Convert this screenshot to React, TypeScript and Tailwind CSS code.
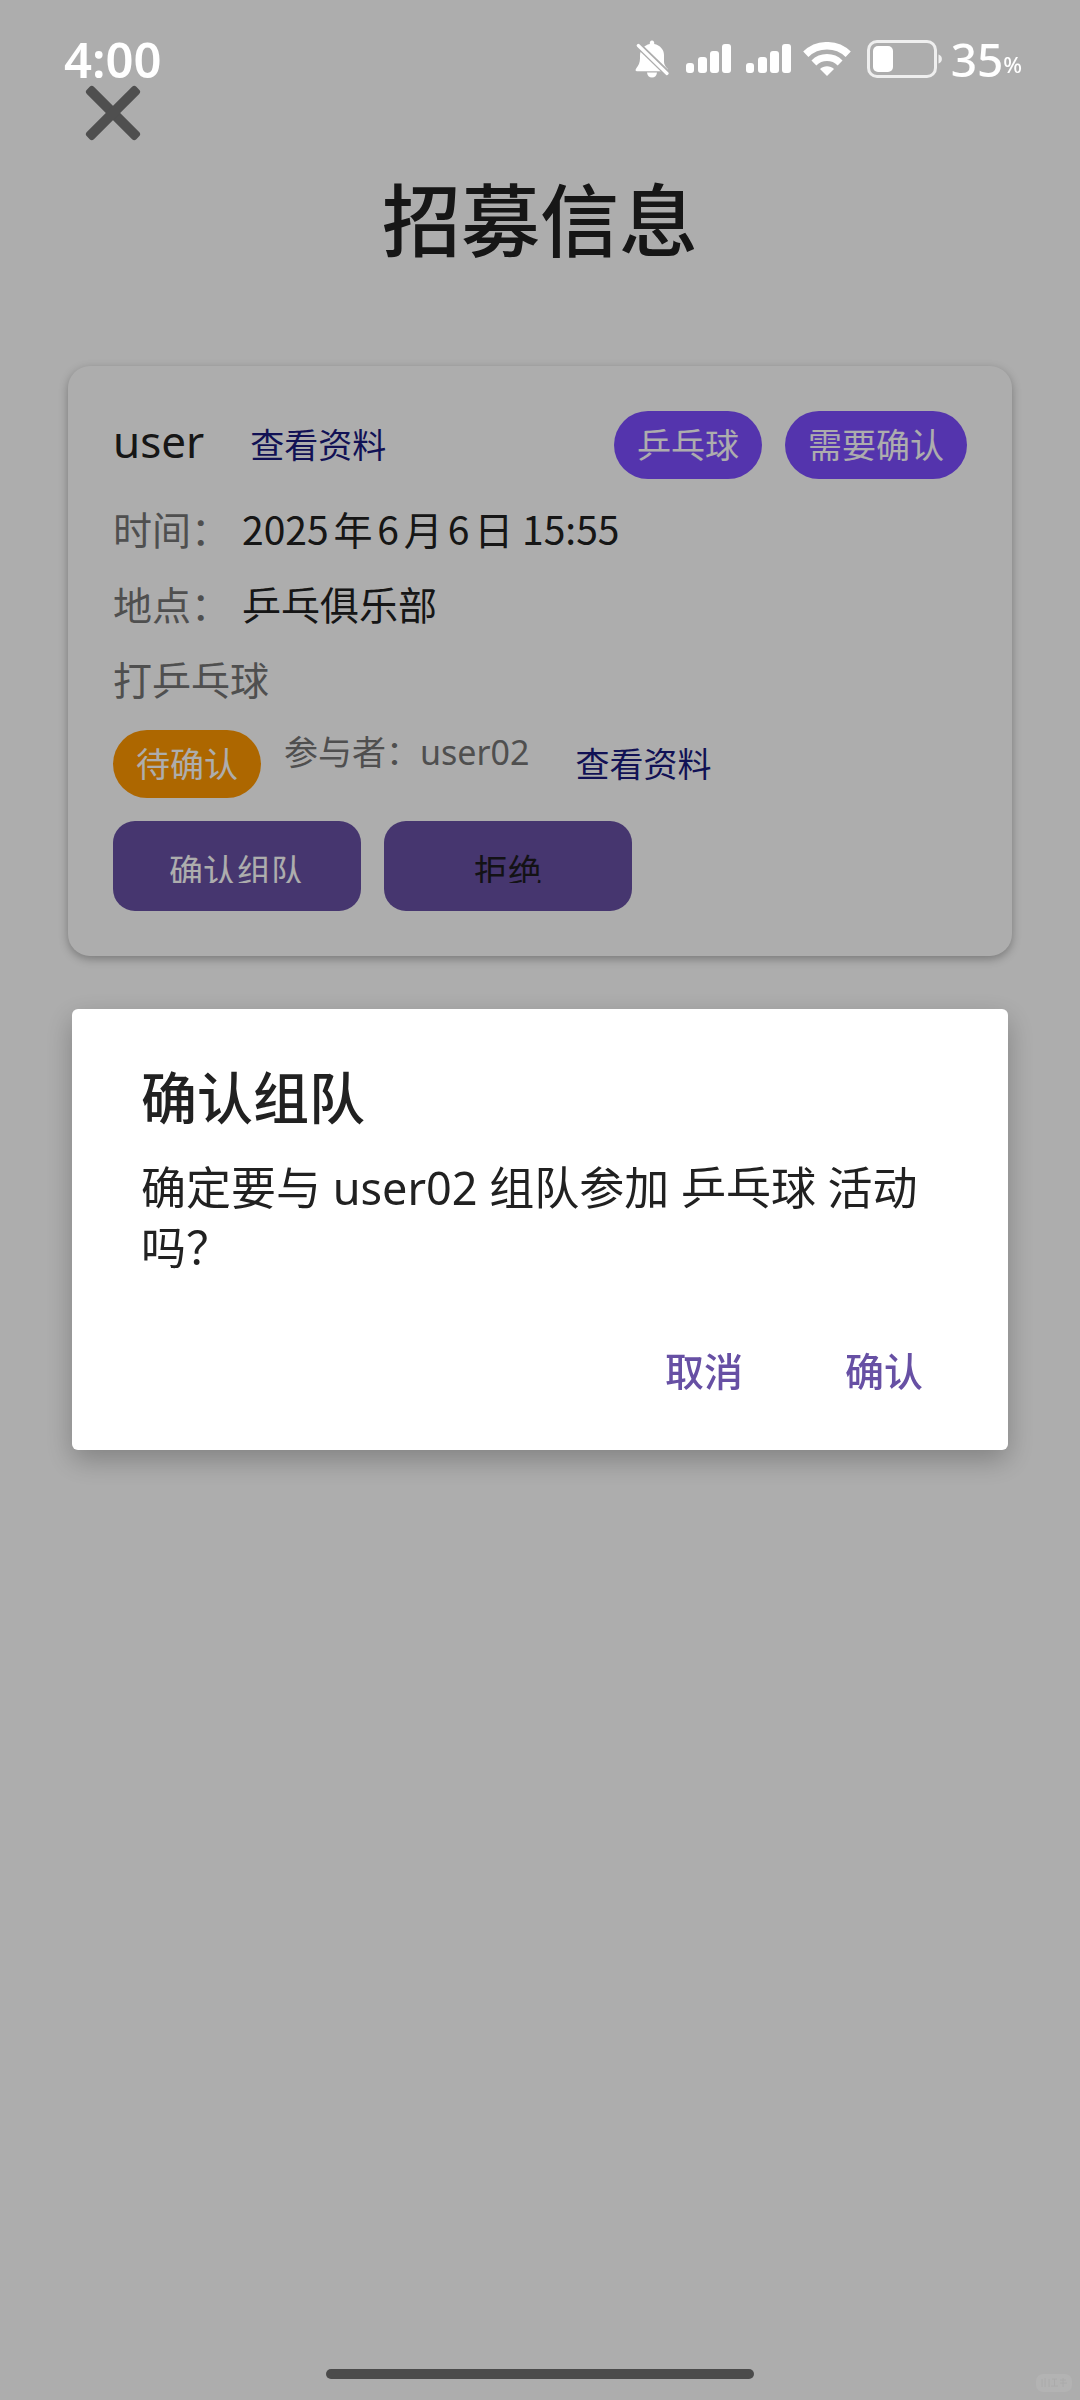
import type { ReactNode } from "react";

function Signal() {
  return (
    <svg viewBox="0 0 45 30" className="h-[30px] w-[45px]" fill="white" aria-hidden="true">
      <rect x="0" y="19" width="8" height="10" rx="3" />
      <rect x="12" y="13" width="9" height="16" rx="3" />
      <rect x="24" y="7" width="9" height="22" rx="3" />
      <rect x="36" y="0" width="9" height="29" rx="3" />
    </svg>
  );
}

function BellOff() {
  return (
    <svg viewBox="0 0 34 38" className="h-[38px] w-[34px]" fill="white" aria-hidden="true">
      <path d="M8 8C9.800 6 12 4.700 14.800 4.100C14.600 1.900 15.400 0.500 17 0.500C18.600 0.500 19.500 1.900 19.200 4.100C25 5.400 29 9.600 29 15V22C29 24.500 30.500 26.800 32.600 28.700C33.500 30 33 31.300 31.500 31.300H2C0.500 31.300 0.200 29.900 1 28.700C3.600 25.500 5 22.500 5 18.500V15.500C5 12.500 6 10.200 8 8Z" />
      <path d="M12 32.500H22C21.800 35.500 19.800 37.500 17 37.500S12.200 35.500 12 32.500Z" />
      <path d="M1.500 3.500L34.500 35.500" stroke="#adadad" strokeWidth="6.500" />
      <path d="M3.300 5.500L32 33.500" stroke="white" strokeWidth="3.200" strokeLinecap="round" />
    </svg>
  );
}

function Wifi() {
  return (
    <svg viewBox="0 0 48 34" className="h-[34px] w-[48px]" fill="none" aria-hidden="true">
      <path d="M2.800 12.200C14.500 0.900 33.500 0.900 45.200 12.200" stroke="white" strokeWidth="7.500" />
      <path d="M10.900 20.900C18.200 13.800 29.800 13.800 37.100 20.900" stroke="white" strokeWidth="7" />
      <path d="M17 27C21 23.400 27 23.400 31 27L24 34Z" fill="white" />
    </svg>
  );
}

function Battery() {
  return (
    <svg viewBox="0 0 76 38" className="h-[38px] w-[76px]" fill="none" aria-hidden="true">
      <rect x="1.500" y="1.500" width="67" height="35" rx="8.500" stroke="white" strokeOpacity="0.8" strokeWidth="3" />
      <rect x="6" y="6" width="20" height="26" rx="5" fill="white" />
      <path d="M71.500 14.500C76 16 76 22 71.500 23.500Z" fill="white" fillOpacity="0.8" />
    </svg>
  );
}

function Chip({ className, children }: { className: string; children: ReactNode }) {
  return (
    <span className={`flex h-[68px] shrink-0 items-center rounded-full px-[23px] text-[34px] leading-[45px] text-white ${className}`}>
      {children}
    </span>
  );
}

function ProfileLink() {
  return (
    <a href="#profile" className="shrink-0 px-[23px] text-[34px] leading-[45px] text-[#1a1a7e]">
      查看资料
    </a>
  );
}

function Detail({ label, value }: { label: string; value: string }) {
  return (
    <div className="flex gap-3 text-[39px] leading-[53px]">
      <dt className="text-[#757575]">{label}</dt>
      <dd>{value}</dd>
    </div>
  );
}

function CardButton({ className, children }: { className: string; children: ReactNode }) {
  return (
    <button type="button" className="h-[90px] w-[248px] rounded-[22px] bg-[#6750a4] py-7 text-[34px] leading-[45px]">
      <span className={`block h-[34px] overflow-hidden ${className}`}>{children}</span>
    </button>
  );
}

function DialogButton({ children }: { children: ReactNode }) {
  return (
    <button type="button" className="px-[34px] py-5 text-[39px] leading-[53px] font-medium text-[#6750a4]">
      {children}
    </button>
  );
}

export default function App() {
  return (
    <div className="min-h-screen bg-white font-['Noto_Sans','Noto_Sans_CJK_SC',sans-serif] text-[#212121]">
      <header className="fixed inset-x-0 top-0 z-20 flex h-[118px] items-center justify-between pr-[58px] pl-16 text-white">
        <time className="text-[49px] leading-[60px] font-semibold">4:00</time>
        <div className="flex items-center">
          <BellOff />
          <div className="ml-[17px] flex gap-[15px]">
            <Signal />
            <Signal />
          </div>
          <div className="ml-3 flex items-center gap-4">
            <Wifi />
            <Battery />
          </div>
          <span className="ml-2 flex items-end font-medium">
            <span className="text-[46px] leading-[60px]">35</span>
            <span className="mb-[10px] text-[22px] leading-[30px]">%</span>
          </span>
        </div>
      </header>

      <main className="px-[68px] pt-[85px]">
        <button type="button" aria-label="关闭" className="ml-[17px] block">
          <svg viewBox="0 0 56 56" className="size-14" fill="#757575" aria-hidden="true">
            <rect x="-7" y="23" width="70" height="10" rx="3" transform="rotate(45 28 28)" />
            <rect x="-7" y="23" width="70" height="10" rx="3" transform="rotate(-45 28 28)" />
          </svg>
        </button>
        <h1 className="mt-8 text-center text-[79px] leading-[96px] font-medium">招募信息</h1>

        <article className="mt-[97px] rounded-[22px] bg-white p-[45px] shadow-[0_3px_10px_rgba(0,0,0,0.3)]">
          <div className="flex items-center justify-between">
            <div className="flex items-center gap-[23px] self-stretch">
              <h2 className="self-start text-[44px] leading-[60px]">user</h2>
              <ProfileLink />
            </div>
            <div className="flex gap-[23px]">
              <Chip className="bg-[#7c4dff]">乒乓球</Chip>
              <Chip className="bg-[#7c4dff]">需要确认</Chip>
            </div>
          </div>
          <dl className="mt-[23px] flex flex-col gap-[22px] font-['Noto_Sans_CJK_SC',sans-serif] [text-autospace:normal]">
            <Detail label="时间：" value="2025年6月6日 15:55" />
            <Detail label="地点：" value="乒乓俱乐部" />
          </dl>
          <p className="mt-[23px] text-[39px] leading-[53px] text-[#757575]">打乒乓球</p>
          <div className="mt-6 flex items-center gap-[23px]">
            <Chip className="bg-[#ff9800]">待确认</Chip>
            <p className="self-start text-[34px] leading-[45px] text-[#757575]">参与者：user02</p>
            <ProfileLink />
          </div>
          <div className="mt-[23px] flex gap-[23px]">
            <CardButton className="text-white">确认组队</CardButton>
            <CardButton className="text-[#1c1b1f]">拒绝</CardButton>
          </div>
        </article>
      </main>

      <div className="fixed inset-0 z-10 flex items-center bg-black/32 px-[72px] pt-[59px]">
        <section
          role="dialog"
          aria-modal="true"
          aria-labelledby="dialog-title"
          className="w-full rounded-md bg-white pt-[51px] pb-[33px] shadow-[0_10px_28px_rgba(0,0,0,0.26)]"
        >
          <div className="px-[69px]">
            <h2 id="dialog-title" className="text-[56px] leading-[75px] font-medium">确认组队</h2>
            <p className="mt-[23px] text-[45px] leading-[60px]">确定要与 user02 组队参加 乒乓球 活动吗？</p>
          </div>
          <div className="mt-[46px] flex justify-end gap-[34px] pr-[51px]">
            <DialogButton>取消</DialogButton>
            <DialogButton>确认</DialogButton>
          </div>
        </section>
      </div>

      <div className="fixed inset-x-0 bottom-[21px] z-20 flex justify-center">
        <div className="h-[10px] w-[428px] rounded-full bg-[#4b4b4b]" />
      </div>
      <svg viewBox="0 0 36 18" className="fixed right-2 bottom-2 z-20 h-[18px] w-9" fill="none" aria-hidden="true">
        <rect width="36" height="18" rx="7" fill="#b3b3b3" />
        <path d="M6 5V13M9 4V13M13 5V13M16 5H21M18.500 5V12M15 12H22M24 6H30M24 9H31M27 4V13" stroke="#aaaaaa" />
      </svg>
    </div>
  );
}
